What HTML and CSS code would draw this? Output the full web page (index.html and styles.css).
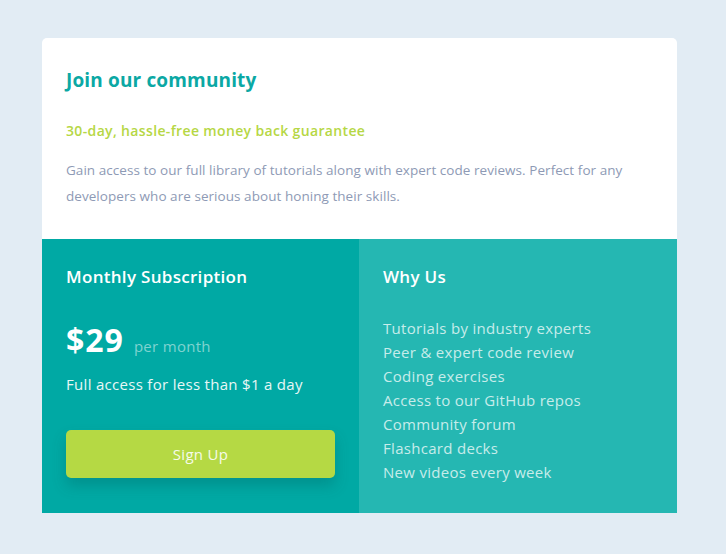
FILE: index.html
```html
<!DOCTYPE html>
<html lang="en">
<head>
<meta charset="utf-8">
<title>Single price grid</title>
<link rel="stylesheet" href="styles.css">
</head>
<body>
<main class="card">
  <section class="intro">
    <h1 class="intro-title">Join our community</h1>
    <p class="intro-sub">30-day, hassle-free money back guarantee</p>
    <p class="intro-text">Gain access to our full library of tutorials along with expert code reviews. Perfect for any developers who are serious about honing their skills.</p>
  </section>
  <div class="bottom">
    <section class="sub">
      <h2 class="col-title">Monthly Subscription</h2>
      <div class="price"><span class="amount">$29</span><span class="per">per month</span></div>
      <p class="sub-text">Full access for less than $1 a day</p>
      <button class="btn">Sign Up</button>
    </section>
    <section class="why">
      <h2 class="col-title">Why Us</h2>
      <ul class="why-list">
        <li>Tutorials by industry experts</li>
        <li>Peer &amp; expert code review</li>
        <li>Coding exercises</li>
        <li>Access to our GitHub repos</li>
        <li>Community forum</li>
        <li>Flashcard decks</li>
        <li>New videos every week</li>
      </ul>
    </section>
  </div>
</main>
</body>
</html>
```
FILE: styles.css
```css
* { box-sizing: border-box; }
body {
  margin: 0;
  background: #e2ecf4;
  font-family: "Open Sans", "Liberation Sans", sans-serif;
  min-height: 554px;
}
.card {
  margin: 38px 0 0 42px;
  width: 635px;
  background: #fff;
  border-radius: 5px 5px 0 0;
}
.intro { padding: 30px 24px 30px; }
.intro-title {
  margin: 0;
  font-size: 19px;
  line-height: 24px;
  font-weight: 700;
  color: #0ba8a4;
  letter-spacing: 0.15px;
}
.intro-sub {
  margin: 29px 0 0;
  font-size: 14px;
  line-height: 20px;
  font-weight: 600;
  letter-spacing: 0.35px;
  color: #b6d745;
}
.intro-text {
  margin: 16px 0 0;
  font-size: 13.5px;
  line-height: 26px;
  letter-spacing: 0.05px;
  color: #8e9ab5;
}
.bottom {
  display: grid;
  grid-template-columns: 317px 318px;
}
.sub {
  background: #00a9a4;
  padding: 26px 24px 35px;
  color: #fff;
}
.why {
  background: #25b7b2;
  padding: 26px 24px 29px;
  color: #fff;
}
.col-title {
  margin: 0;
  font-size: 17px;
  line-height: 24px;
  font-weight: 600;
  letter-spacing: 0.3px;
}
.price {
  margin-top: 31px;
  height: 40px;
  display: flex;
  align-items: baseline;
  gap: 10px;
}
.amount {
  font-size: 32px;
  line-height: 40px;
  font-weight: 700;
  letter-spacing: 1px;
}
.per {
  font-size: 15px;
  letter-spacing: 0.3px;
  color: #7fd3d0;
}
.sub-text {
  margin: 12px 0 0;
  font-size: 15px;
  line-height: 24px;
  letter-spacing: 0.3px;
  color: #e8f7f6;
}
.btn {
  display: block;
  margin-top: 34px;
  width: 100%;
  height: 48px;
  border: 0;
  border-radius: 5px;
  background: #b5d944;
  color: #f6fbe9;
  font-family: inherit;
  font-size: 15px;
  letter-spacing: 0.3px;
  box-shadow: 0 8px 14px rgba(0, 80, 80, 0.25);
}
.why-list {
  list-style: none;
  margin: 27px 0 0;
  padding: 0;
  font-size: 15px;
  line-height: 24px;
  letter-spacing: 0.3px;
  color: #c7ecea;
}
```
